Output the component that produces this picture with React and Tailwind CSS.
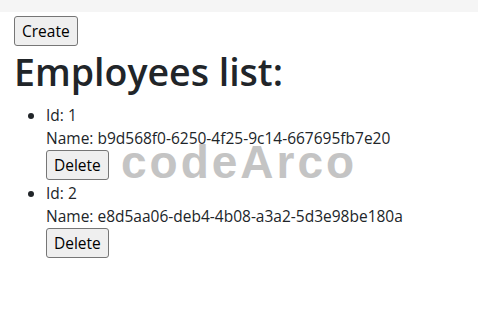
const employees = [
  { id: 1, name: "b9d568f0-6250-4f25-9c14-667695fb7e20" },
  { id: 2, name: "e8d5aa06-deb4-4b08-a3a2-5d3e98be180a" },
];

function Btn({ children }) {
  return (
    <button className="block rounded-[3px] border border-[#767676] bg-[#efefef] px-[7px] py-[3px] text-[15.5px] leading-[22px] text-black">
      {children}
    </button>
  );
}

export default function App() {
  return (
    <div className="relative min-h-[315px] bg-white font-['Open_Sans',sans-serif] text-[#212529]">
      <div className="h-[12px] bg-[#f5f5f5]" />
      <div className="px-[14px] pt-[4px]">
        <Btn>Create</Btn>
        <h1 className="mt-[2px] text-[37.5px] font-semibold leading-[48px]">Employees list:</h1>
        <ul className="mt-[8px] list-disc pl-[32px] text-[15.5px]">
          {employees.map((e) => (
            <li key={e.id} className="mb-[2px]">
              <p className="leading-[23px]">Id: {e.id}</p>
              <p className="leading-[23px]">Name: {e.name}</p>
              <Btn>Delete</Btn>
            </li>
          ))}
        </ul>
      </div>
      <div className="pointer-events-none absolute left-[121px] top-[128px] font-['Liberation_Sans',sans-serif] text-[46px] font-bold tracking-[3px] text-[#c4c4c4]">
        codeArco
      </div>
    </div>
  );
}
